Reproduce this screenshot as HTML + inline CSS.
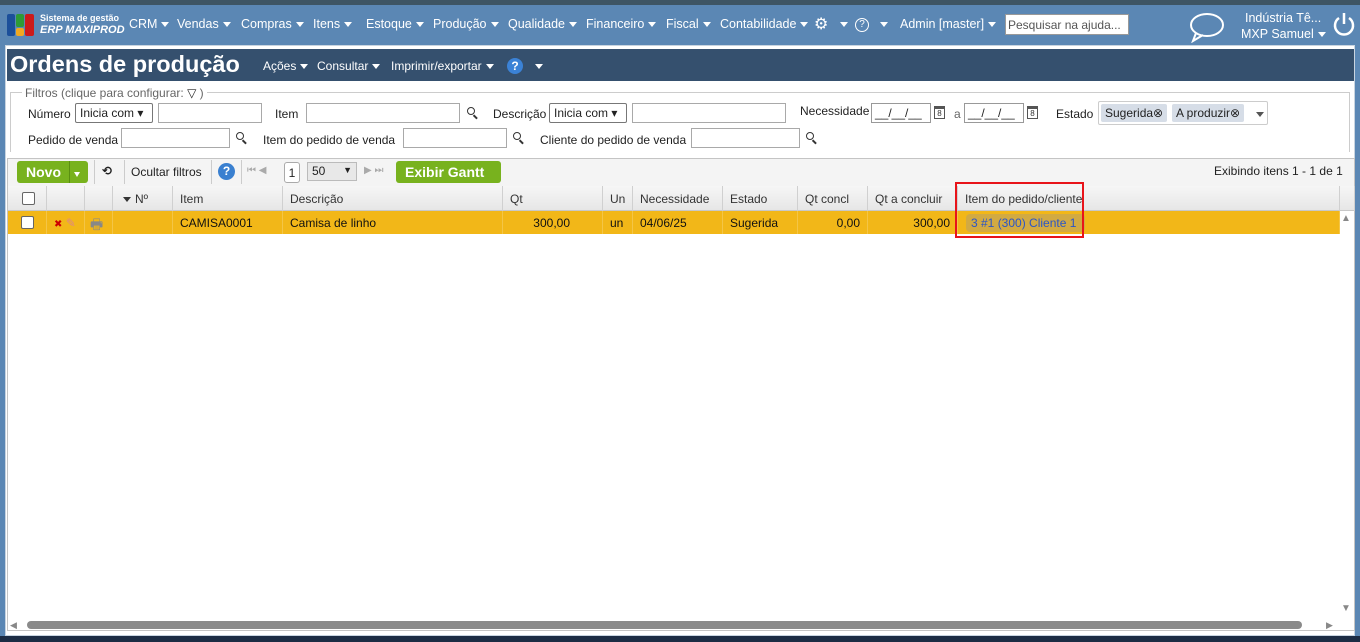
<!DOCTYPE html>
<html><head><meta charset="utf-8"><style>
*{box-sizing:border-box;margin:0;padding:0}
body{width:1360px;height:642px;overflow:hidden;background:#5b87b4;font-family:"Liberation Sans","DejaVu Sans",sans-serif;font-size:12px;color:#222;position:relative}
.abs{position:absolute}
.topstrip{left:0;top:0;width:1360px;height:5px;background:#3e5564}
.nav{top:5px;left:0;width:1360px;height:40px;background:#5b87b4;color:#fff}
.nav span.m{position:absolute;top:12px;font-size:12.5px;white-space:nowrap}
.tri{display:inline-block;width:0;height:0;border-left:4px solid transparent;border-right:4px solid transparent;border-top:5px solid currentColor;vertical-align:middle;margin-left:4px}
.page{left:5px;top:45px;width:1350px;height:591px;background:#fff;border:1px solid #c8d4e0}
.title{left:7px;top:49px;width:1347px;height:32px;background:#35506e;color:#fff}
.bot{left:0;top:636px;width:1360px;height:6px;background:#1c2c44}
input.t{position:absolute;height:20px;border:1px solid #a9a9a9;background:#fff}
.lbl{position:absolute;font-size:12px;white-space:nowrap}
.sel{position:absolute;height:20px;border:1px solid #777;border-radius:2px;font-size:12px;padding:2px 4px;background:#fff}
.mag{position:absolute;width:8px;height:8px;border:1.5px solid #333;border-radius:50%}
.mag:after{content:"";position:absolute;width:5px;height:1.5px;background:#333;left:5px;top:8px;transform:rotate(45deg)}
.cal{position:absolute;width:11px;height:13px;border:1px solid #555;border-top-width:3px;font-size:8px;text-align:center;line-height:9px;color:#333}
.th{position:absolute;top:186px;height:25px;background:linear-gradient(#f6f6f6,#e6e6e6);border-right:1px solid #d0d0d0;border-bottom:1px solid #c8c8c8;padding:6px 7px;font-size:12px;color:#333;white-space:nowrap}
.td{position:absolute;top:211px;height:23px;background:#f2b718;border-right:1px solid #fff3;padding:5px 7px;font-size:12px;color:#111;white-space:nowrap}
.cb{position:absolute;width:13px;height:13px;border:1px solid #666;border-radius:2px;background:#fff}
</style></head><body>
<div class="abs topstrip"></div>
<div class="abs nav">
 <div class="abs" style="left:7px;top:9px;width:8px;height:22px;background:#1c4f9a;border-radius:2px"></div>
 <div class="abs" style="left:16px;top:9px;width:8px;height:13px;background:#2e9a36;border-radius:2px"></div>
 <div class="abs" style="left:16px;top:23px;width:8px;height:8px;background:#f0a820;border-radius:2px"></div>
 <div class="abs" style="left:25px;top:9px;width:9px;height:22px;background:#cc1a1a;border-radius:2px"></div>
 <div class="abs" style="left:40px;top:8px;font-size:9px;font-weight:bold">Sistema de gestão</div>
 <div class="abs" style="left:40px;top:19px;font-size:11px;font-weight:bold;font-style:italic">ERP MAXIPROD</div>
 <span class="m" style="left:129px">CRM<i class="tri"></i></span>
 <span class="m" style="left:177px">Vendas<i class="tri"></i></span>
 <span class="m" style="left:241px">Compras<i class="tri"></i></span>
 <span class="m" style="left:313px">Itens<i class="tri"></i></span>
 <span class="m" style="left:366px">Estoque<i class="tri"></i></span>
 <span class="m" style="left:433px">Produção<i class="tri"></i></span>
 <span class="m" style="left:508px">Qualidade<i class="tri"></i></span>
 <span class="m" style="left:586px">Financeiro<i class="tri"></i></span>
 <span class="m" style="left:666px">Fiscal<i class="tri"></i></span>
 <span class="m" style="left:720px">Contabilidade<i class="tri"></i></span>
 <span class="m" style="left:814px;font-size:16px;top:9px">⚙</span><span class="m" style="left:836px"><i class="tri"></i></span>
 <span class="m" style="left:855px;width:14px;height:14px;border:1.5px solid #fff;border-radius:50%;font-size:10px;text-align:center;line-height:11px;top:13px">?</span><span class="m" style="left:876px"><i class="tri"></i></span>
 <span class="m" style="left:900px">Admin [master]<i class="tri"></i></span>
 <div class="abs" style="left:1005px;top:9px;width:124px;height:21px;background:#fff;border:1px solid #999;color:#555;font-size:12px;padding:3px 2px">Pesquisar na ajuda...</div>
 <svg class="abs" style="left:1188px;top:6px" width="38" height="32"><ellipse cx="19" cy="14" rx="16" ry="11" fill="none" stroke="#fff" stroke-width="2"/><path d="M8 22 L5 30 L15 24" fill="none" stroke="#fff" stroke-width="2"/></svg>
 <span class="m" style="left:1245px;top:6px">Indústria Tê...</span>
 <span class="m" style="left:1241px;top:22px">MXP Samuel<i class="tri"></i></span>
 <svg class="abs" style="left:1332px;top:6px" width="24" height="26"><path d="M7 7 A9 9 0 1 0 17 7" fill="none" stroke="#fff" stroke-width="2.5"/><line x1="12" y1="2" x2="12" y2="13" stroke="#fff" stroke-width="2.5"/></svg>
</div>
<div class="abs page"></div>
<div class="abs title">
 <div class="abs" style="left:3px;top:2px;font-size:23.5px;font-weight:bold">Ordens de produção</div>
 <span class="abs" style="left:256px;top:10px">Ações<i class="tri"></i></span>
 <span class="abs" style="left:310px;top:10px">Consultar<i class="tri"></i></span>
 <span class="abs" style="left:384px;top:10px">Imprimir/exportar<i class="tri"></i></span>
 <span class="abs" style="left:500px;top:9px;width:16px;height:16px;border-radius:50%;background:#3b82d6;font-weight:bold;text-align:center;line-height:16px;font-size:12px">?</span>
 <span class="abs" style="left:524px;top:10px"><i class="tri"></i></span>
</div>
<!-- filters -->
<div class="abs" style="left:10px;top:92px;width:1340px;height:60px;border:1px solid #ccc;border-bottom:none"></div>
<div class="lbl" style="left:22px;top:86px;background:#fff;color:#666;padding:0 3px">Filtros (clique para configurar: <span style="color:#222">▽</span> )</div>
<div class="lbl" style="left:28px;top:107px">Número</div>
<div class="sel" style="left:75px;top:103px;width:78px">Inicia com ▾</div>
<input class="t" style="left:158px;top:103px;width:104px">
<div class="lbl" style="left:275px;top:107px">Item</div>
<input class="t" style="left:306px;top:103px;width:154px">
<div class="mag" style="left:467px;top:107px"></div>
<div class="lbl" style="left:493px;top:107px">Descrição</div>
<div class="sel" style="left:549px;top:103px;width:78px">Inicia com ▾</div>
<input class="t" style="left:632px;top:103px;width:154px">
<div class="lbl" style="left:800px;top:104px">Necessidade</div>
<div class="abs" style="left:871px;top:103px;width:60px;height:20px;border:1px solid #999;padding:2px 3px">__/__/__</div>
<div class="cal" style="left:934px;top:106px">8</div>
<div class="lbl" style="left:954px;top:107px;color:#666">a</div>
<div class="abs" style="left:964px;top:103px;width:60px;height:20px;border:1px solid #999;padding:2px 3px">__/__/__</div>
<div class="cal" style="left:1027px;top:106px">8</div>
<div class="lbl" style="left:1056px;top:107px">Estado</div>
<div class="abs" style="left:1098px;top:101px;width:170px;height:24px;border:1px solid #ccc;border-radius:2px"></div>
<div class="abs" style="left:1101px;top:104px;height:18px;background:#d6dde7;padding:2px 4px;border-radius:2px">Sugerida⊗</div>
<div class="abs" style="left:1172px;top:104px;height:18px;background:#d6dde7;padding:2px 4px;border-radius:2px">A produzir⊗</div>
<div class="lbl" style="left:1252px;top:107px;color:#555"><i class="tri" style="border-top-color:#555"></i></div>
<div class="lbl" style="left:28px;top:133px">Pedido de venda</div>
<input class="t" style="left:121px;top:128px;width:109px">
<div class="mag" style="left:236px;top:132px"></div>
<div class="lbl" style="left:263px;top:133px">Item do pedido de venda</div>
<input class="t" style="left:403px;top:128px;width:104px">
<div class="mag" style="left:513px;top:132px"></div>
<div class="lbl" style="left:540px;top:133px">Cliente do pedido de venda</div>
<input class="t" style="left:691px;top:128px;width:109px">
<div class="mag" style="left:806px;top:132px"></div>
<!-- grid area -->
<div class="abs" style="left:7px;top:158px;width:1348px;height:473px;border:1px solid #c4c4c4"></div>
<div class="abs" style="left:8px;top:159px;width:1346px;height:27px;background:#f4f4f4"></div>
<div class="abs" style="left:17px;top:161px;width:71px;height:22px;background:#78b21e;border-radius:3px;color:#fff;font-weight:bold;font-size:14px;padding:3px 9px">Novo</div>
<div class="abs" style="left:69px;top:161px;width:1px;height:22px;background:#5a8f10"></div>
<div class="abs" style="left:74px;top:167px;color:#fff"><i class="tri" style="margin:0;border-left-width:3px;border-right-width:3px;border-top-width:5px"></i></div>
<div class="abs" style="left:94px;top:160px;width:1px;height:24px;background:#ccc"></div>
<div class="lbl" style="left:102px;top:164px;font-weight:bold">⟲</div>
<div class="abs" style="left:124px;top:160px;width:1px;height:24px;background:#ccc"></div>
<div class="lbl" style="left:131px;top:165px">Ocultar filtros</div>
<div class="abs" style="left:211px;top:160px;width:1px;height:24px;background:#ccc"></div>
<div class="abs" style="left:218px;top:163px;width:17px;height:17px;border-radius:50%;background:#3a80d0;color:#fff;font-weight:bold;text-align:center;line-height:17px">?</div>
<div class="abs" style="left:241px;top:160px;width:1px;height:24px;background:#ccc"></div>
<div class="lbl" style="left:247px;top:165px;color:#aaa;font-size:10px">⏮ ◀</div>
<div class="abs" style="left:284px;top:162px;width:16px;height:21px;border:1px solid #aaa;border-radius:3px;background:#fff;text-align:center;padding-top:3px">1</div>
<div class="abs" style="left:307px;top:162px;width:50px;height:19px;border:1px solid #bbb;background:#e8e8e8;padding:1px 4px">50 <span style="position:absolute;right:4px;top:2px;font-size:9px">▼</span></div>
<div class="lbl" style="left:364px;top:165px;color:#aaa;font-size:10px">▶ ⏭</div>
<div class="abs" style="left:396px;top:161px;width:105px;height:22px;background:#78b21e;border-radius:3px;color:#fff;font-weight:bold;font-size:14px;padding:3px 9px">Exibir Gantt</div>
<div class="lbl" style="left:1214px;top:164px">Exibindo itens 1 - 1 de 1</div>
<!-- header -->
<div class="th" style="left:8px;width:39px"></div><div class="cb" style="left:22px;top:192px"></div>
<div class="th" style="left:47px;width:38px"></div>
<div class="th" style="left:85px;width:28px"></div>
<div class="th" style="left:113px;width:60px;padding-left:10px"><i class="tri" style="margin:0 4px 0 0"></i>Nº</div>
<div class="th" style="left:173px;width:110px">Item</div>
<div class="th" style="left:283px;width:220px">Descrição</div>
<div class="th" style="left:503px;width:100px">Qt</div>
<div class="th" style="left:603px;width:30px">Un</div>
<div class="th" style="left:633px;width:90px">Necessidade</div>
<div class="th" style="left:723px;width:75px">Estado</div>
<div class="th" style="left:798px;width:70px">Qt concl</div>
<div class="th" style="left:868px;width:90px">Qt a concluir</div>
<div class="th" style="left:958px;width:382px">Item do pedido/cliente</div>
<div class="th" style="left:1340px;width:15px"></div>
<!-- row -->
<div class="td" style="left:8px;width:39px"></div><div class="cb" style="left:21px;top:216px"></div>
<div class="td" style="left:47px;width:38px"><span style="color:#c00;font-size:10px;font-weight:bold">✖</span> <span style="color:#d88">✎</span></div>
<div class="td" style="left:85px;width:28px;color:#888;padding:3px 5px;font-size:14px">🖶</div>
<div class="td" style="left:113px;width:60px"></div>
<div class="td" style="left:173px;width:110px">CAMISA0001</div>
<div class="td" style="left:283px;width:220px">Camisa de linho</div>
<div class="td" style="left:503px;width:100px;text-align:right;padding-right:32px">300,00</div>
<div class="td" style="left:603px;width:30px">un</div>
<div class="td" style="left:633px;width:90px">04/06/25</div>
<div class="td" style="left:723px;width:75px">Sugerida</div>
<div class="td" style="left:798px;width:70px;text-align:right">0,00</div>
<div class="td" style="left:868px;width:90px;text-align:right">300,00</div>
<div class="td" style="left:958px;width:382px"></div>
<div class="abs" style="left:966px;top:214px;width:119px;height:18px;background:#d2aa42;border-radius:4px;color:#2a55c8;padding:2px 5px;white-space:nowrap;overflow:hidden">3 #1 (300) Cliente 1</div>
<div class="abs" style="left:955px;top:182px;width:129px;height:56px;border:2.5px solid #e8141a"></div>
<div class="lbl" style="left:1341px;top:213px;color:#888;font-size:10px">▲</div>
<div class="lbl" style="left:1341px;top:603px;color:#888;font-size:10px">▼</div>
<!-- h scrollbar -->
<div class="abs" style="left:10px;top:620px;color:#888;font-size:9px">◀</div>
<div class="abs" style="left:27px;top:621px;width:1275px;height:8px;background:#8a8a8a;border-radius:4px"></div>
<div class="abs" style="left:1326px;top:620px;color:#888;font-size:9px">▶</div>
<div class="abs bot"></div>
</body></html>
